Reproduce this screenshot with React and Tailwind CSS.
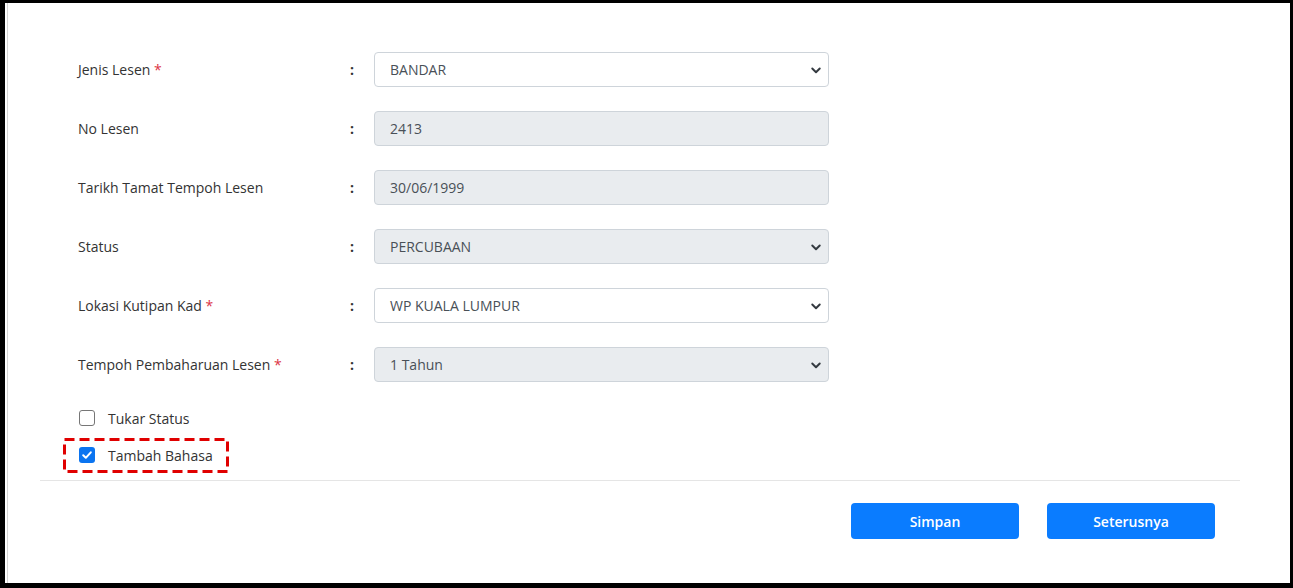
import React from "react";

function Chevron() {
  return (
    <svg width="12" height="12" viewBox="0 0 16 16" className="absolute right-[6px] top-1/2 -translate-y-1/2">
      <path d="M3 6 L8 11 L13 6" fill="none" stroke="#343a40" strokeWidth="2.6" strokeLinecap="round" strokeLinejoin="round" />
    </svg>
  );
}

function Field({ value, disabled, select, upper }) {
  return (
    <div
      className={
        "relative w-[455px] h-[35px] rounded-[4px] border border-[#ced4da] flex items-center pl-[15px] text-[14px] text-[#495057] " +
        (disabled ? "bg-[#e9ecef]" : "bg-white")
      }
    >
      <span className={upper ? "font-medium" : ""}>{value}</span>
      {select && <Chevron />}
    </div>
  );
}

function Row({ label, req, children }) {
  return (
    <div className="flex items-center h-[35px]">
      <div className="w-[272px] text-[14px] text-[#333333] font-medium">
        {label}
        {req && <span className="text-[#dc3545]"> *</span>}
      </div>
      <div className="w-[24px] text-[14px] font-bold text-[#333]">:</div>
      {children}
    </div>
  );
}

export default function App() {
  return (
    <div
      className="w-[1293px] h-[588px] bg-black pt-[3px] pl-[5px] pr-[3px] pb-[5px]"
      style={{ fontFamily: "'Open Sans', 'Noto Sans', sans-serif" }}
    >
      <div className="w-full h-full bg-white pl-[2px]">
        <div className="h-full border-l border-[#d4d4d4] pl-[32px] pt-[49px]">
          <div className="w-[1200px]">
            <div className="pl-[38px] flex flex-col gap-[24px]">
              <Row label="Jenis Lesen" req>
                <Field value="BANDAR" select upper />
              </Row>
              <Row label="No Lesen">
                <Field value="2413" disabled />
              </Row>
              <Row label="Tarikh Tamat Tempoh Lesen">
                <Field value="30/06/1999" disabled />
              </Row>
              <Row label="Status">
                <Field value="PERCUBAAN" disabled select upper />
              </Row>
              <Row label="Lokasi Kutipan Kad" req>
                <Field value="WP KUALA LUMPUR" select upper />
              </Row>
              <Row label="Tempoh Pembaharuan Lesen" req>
                <Field value="1 Tahun" disabled select />
              </Row>
            </div>
            <div className="pl-[39px] mt-[27px] flex flex-col gap-[19px]">
              <div className="flex items-center h-[18px]">
                <div className="w-[16px] h-[16px] rounded-[3px] border-[1.5px] border-[#767676] bg-white" />
                <span className="ml-[13px] text-[14px] text-[#333] font-medium">Tukar Status</span>
              </div>
              <div className="relative flex items-center h-[18px]">
                <div className="w-[16px] h-[16px] rounded-[3px] bg-[#0b74f0] flex items-center justify-center">
                  <svg width="12" height="12" viewBox="0 0 12 12">
                    <path d="M2.2 6.3 L4.8 8.8 L9.8 3.3" fill="none" stroke="white" strokeWidth="2" strokeLinecap="round" strokeLinejoin="round" />
                  </svg>
                </div>
                <span className="ml-[13px] text-[14px] text-[#333] font-medium">Tambah Bahasa</span>
                <svg className="absolute left-[-16px] top-[-8px]" width="166" height="35">
                  <rect x="1.5" y="1.5" width="163" height="32" fill="none" stroke="#e00000" strokeWidth="3" strokeDasharray="10 5" />
                </svg>
              </div>
            </div>
            <div className="mt-[16px] border-t border-[#e5e5e5]" />
            <div className="flex justify-end gap-[28px] pr-[25px] mt-[22px]">
              <button className="w-[168px] h-[36px] rounded-[4px] bg-[#0a7cff] text-white text-[14px] font-semibold">Simpan</button>
              <button className="w-[168px] h-[36px] rounded-[4px] bg-[#0a7cff] text-white text-[14px] font-semibold">Seterusnya</button>
            </div>
          </div>
        </div>
      </div>
    </div>
  );
}
